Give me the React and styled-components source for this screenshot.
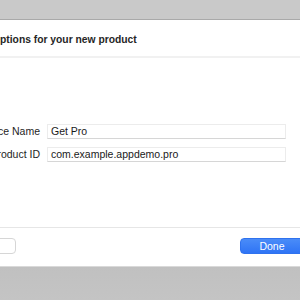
import React from "react";
import styled, { createGlobalStyle } from "styled-components";

const Global = createGlobalStyle`
  html, body {
    margin: 0;
    padding: 0;
    overflow: hidden;
  }
  body {
    font-family: "Liberation Sans", Arial, sans-serif;
  }
`;

const Screen = styled.div`
  width: 300px;
  height: 300px;
  overflow: hidden;
  display: flex;
  flex-direction: column;
  background: linear-gradient(#a2a2a2, #c4c4c4);
`;

const TopBand = styled.div`
  height: 19px;
  flex: none;
  background: #c9c9c9;
  border-bottom: 1px solid #a9a9a9;
`;

const Sheet = styled.div`
  flex: none;
  height: 246px;
  width: 380px;
  margin-left: -60px;
  background: #fff;
  display: flex;
  flex-direction: column;
  border-bottom: 1px solid #d9d9d9;
`;

const Header = styled.div`
  height: 38px;
  padding: 3px 0 0 52px;
  box-sizing: border-box;
  display: flex;
  align-items: center;
  font-size: 10.3px;
  font-weight: 700;
  color: #262626;
  border-bottom: 2px solid #f1f1f1;
`;

const Body = styled.div`
  flex: 1;
  display: grid;
  grid-template-columns: 100px 239px;
  column-gap: 7px;
  row-gap: 8px;
  align-content: start;
  padding-top: 66px;
`;

const Label = styled.div`
  font-size: 10.5px;
  color: #1e1e1e;
  text-align: right;
  line-height: 15px;
  white-space: nowrap;
`;

const Field = styled.div`
  height: 15px;
  box-sizing: border-box;
  padding-left: 3px;
  font-size: 10.5px;
  line-height: 13px;
  color: #1a1a1a;
  background: #fff;
  border: 1px solid #ececec;
  border-bottom-color: #d6d6d6;
`;

const Footer = styled.div`
  height: 39px;
  box-sizing: border-box;
  border-top: 1px solid #e6e6e6;
  display: flex;
  align-items: flex-start;
  justify-content: space-between;
  padding: 10px 0 0 0;
`;

const Button = styled.div`
  height: 16px;
  box-sizing: border-box;
  border-radius: 4px;
  font-size: 10.5px;
  line-height: 14px;
  text-align: center;
  width: ${(p) => p.w}px;
  margin-left: ${(p) => p.ml || 0}px;
  margin-right: ${(p) => p.mr || 0}px;
  color: ${(p) => (p.primary ? "#fff" : "#222")};
  background: ${(p) =>
    p.primary ? "linear-gradient(#4a8cf8, #2f74f5)" : "#fff"};
  border: 1px solid ${(p) => (p.primary ? "#2f72ee" : "#d6d6d6")};
`;

export default function App() {
  return (
    <Screen>
      <Global />
      <TopBand />
      <Sheet>
        <Header>Options for your new product</Header>
        <Body>
          <Label>Reference Name</Label>
          <Field>Get Pro</Field>
          <Label>Product ID</Label>
          <Field>com.example.appdemo.pro</Field>
        </Body>
        <Footer>
          <Button w={70} ml={6}>Cancel</Button>
          <Button primary w={64} mr={16}>Done</Button>
        </Footer>
      </Sheet>
    </Screen>
  );
}
